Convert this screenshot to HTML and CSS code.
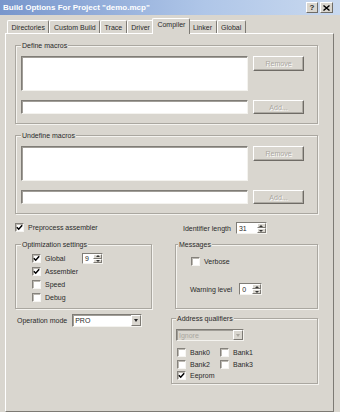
FILE: index.html
```html
<!DOCTYPE html>
<html lang="en">
<head>
  <meta charset="UTF-8">
  <meta name="viewport" content="width=device-width, initial-scale=1.0">
  <title>Build Options For Project "demo.mcp"</title>
  <link rel="stylesheet" href="styles.css">
</head>
<body>
  <div class="titlebar">
    <span class="title">Build Options For Project "demo.mcp"</span>
    <span class="caption-btns">
      <span class="cbtn help">?</span>
      <span class="cbtn">
        <svg width="7" height="6" viewBox="0 0 7 6"><path d="M0.5 0.5 L6.5 5.5 M6.5 0.5 L0.5 5.5" stroke="#000" stroke-width="1.4"/></svg>
      </span>
    </span>
  </div>

  <div class="tabs">
    <span class="tab">Directories</span>
    <span class="tab">Custom Build</span>
    <span class="tab">Trace</span>
    <span class="tab">Driver</span>
    <span class="tab active">Compiler</span>
    <span class="tab">Linker</span>
    <span class="tab">Global</span>
  </div>

  <div class="panel">
    <!-- macro lists -->
    <fieldset class="group">
      <legend>Define macros</legend>
      <div class="macro-grid">
        <div class="list"></div>
        <button class="btn tall" disabled>Remove</button>
        <div class="field"></div>
        <button class="btn" disabled>Add...</button>
      </div>
    </fieldset>

    <fieldset class="group undef">
      <legend>Undefine macros</legend>
      <div class="macro-grid">
        <div class="list"></div>
        <button class="btn tall" disabled>Remove</button>
        <div class="field"></div>
        <button class="btn" disabled>Add...</button>
      </div>
    </fieldset>

    <div class="options">
      <label class="check">
        <span class="box"><svg width="7" height="7" viewBox="0 0 7 7"><path d="M0.8 3.2 L2.7 5.2 L6.2 1.2" stroke="#000" stroke-width="1.5" fill="none"/></svg></span>
        Preprocess assembler
      </label>
      <div class="ident">
        Identifier length
        <span class="spin wide"><span class="spin-val">31</span><span class="spin-arrows"><i class="up"></i><i class="down"></i></span></span>
      </div>

      <fieldset class="group opt">
        <legend>Optimization settings</legend>
        <div class="opt-row">
          <label class="check">
            <span class="box"><svg width="7" height="7" viewBox="0 0 7 7"><path d="M0.8 3.2 L2.7 5.2 L6.2 1.2" stroke="#000" stroke-width="1.5" fill="none"/></svg></span>
            Global
          </label>
          <span class="spin"><span class="spin-val">9</span><span class="spin-arrows"><i class="up"></i><i class="down"></i></span></span>
        </div>
        <label class="check">
          <span class="box"><svg width="7" height="7" viewBox="0 0 7 7"><path d="M0.8 3.2 L2.7 5.2 L6.2 1.2" stroke="#000" stroke-width="1.5" fill="none"/></svg></span>
          Assembler
        </label>
        <label class="check"><span class="box"></span>Speed</label>
        <label class="check"><span class="box"></span>Debug</label>
      </fieldset>

      <fieldset class="group msgs">
        <legend>Messages</legend>
        <label class="check verbose"><span class="box"></span>Verbose</label>
        <div class="warn">
          Warning level
          <span class="spin small"><span class="spin-val">0</span><span class="spin-arrows"><i class="up"></i><i class="down"></i></span></span>
        </div>
      </fieldset>

      <div class="opmode">
        Operation mode
        <span class="combo">PRO<span class="drop"><i></i></span></span>
      </div>

      <fieldset class="group addr">
        <legend>Address qualifiers</legend>
        <span class="combo disabled">Ignore<span class="drop"><i></i></span></span>
        <div class="banks">
          <label class="check"><span class="box"></span>Bank0</label>
          <label class="check"><span class="box"></span>Bank1</label>
          <label class="check"><span class="box"></span>Bank2</label>
          <label class="check"><span class="box"></span>Bank3</label>
          <label class="check">
            <span class="box"><svg width="7" height="7" viewBox="0 0 7 7"><path d="M0.8 3.2 L2.7 5.2 L6.2 1.2" stroke="#000" stroke-width="1.5" fill="none"/></svg></span>
            Eeprom
          </label>
        </div>
      </fieldset>
    </div>
  </div>
</body>
</html>
```

FILE: styles.css
```css
/* classic dialog look */
body {
  margin: 0;
  width: 340px;
  height: 412px;
  overflow: hidden;
  background-color: #d9d6cf;
  font-family: "Liberation Sans", Arial, sans-serif;
  font-size: 7px;
  color: #2a2a2a;
}

.titlebar {
  height: 15px;
  display: flex;
  align-items: center;
  justify-content: space-between;
  padding: 0 7px 0 3px;
  background: linear-gradient(90deg, #7896cc, #afc6e8 60%, #c9d9ef);
}

.title {
  color: #fff;
  font-size: 8px;
  font-weight: bold;
}

.caption-btns {
  display: flex;
  gap: 2px;
}

.cbtn {
  width: 12px;
  height: 11px;
  box-sizing: border-box;
  display: flex;
  align-items: center;
  justify-content: center;
  background-color: #d9d6cf;
  border: 1px solid;
  border-color: #fff #6f6c66 #6f6c66 #fff;
  font-size: 8px;
  font-weight: bold;
}

.cbtn + .cbtn {
  width: 13px;
}

/* tabs */
.tabs {
  height: 18px;
  display: flex;
  align-items: flex-end;
  padding-left: 7px;
}

.tab {
  height: 13px;
  line-height: 13px;
  box-sizing: border-box;
  padding: 0 3.5px;
  border-top: 1px solid #fff;
  border-left: 1px solid #fff;
  border-right: 1px solid #7d7a74;
  border-radius: 2px 2px 0 0;
  white-space: nowrap;
}

.tab.active {
  height: 16px;
  line-height: 11px;
  padding: 0 4px;
  margin: 0 -2px -1px -2px;
  position: relative;
  z-index: 1;
  background-color: #d9d6cf;
}

.panel {
  margin-left: 5px;
  width: 329px;
  height: 379px;
  box-sizing: border-box;
  border: 1px solid;
  border-color: #fff #7d7a74 #7d7a74 #fff;
  padding: 7px 15px 0 9px;
}

/* group boxes */
.group {
  margin: 0;
  min-width: 0;
  padding: 6px 5px 9px;
  border: 1px solid #aaa7a0;
  box-shadow: inset 1px 1px 0 #f4f3ef, 1px 1px 0 #f4f3ef;
}

.group legend {
  padding: 0 1px;
  line-height: 9px;
  background-color: #d9d6cf;
}

.group.undef {
  margin-top: 7px;
}

.macro-grid {
  display: grid;
  grid-template-columns: 227px 51px;
  column-gap: 5px;
  row-gap: 9px;
  align-items: start;
}

.list,
.field {
  background-color: #fff;
  box-sizing: border-box;
  border: 1px solid;
  border-color: #7f7c76 #f4f3ef #f4f3ef #7f7c76;
  box-shadow: inset 1px 1px 0 #a19e98;
}

.list {
  height: 35px;
}

.field {
  height: 14px;
}

.btn {
  font: inherit;
  height: 14px;
  padding: 0;
  color: #aaa7a0;
  text-shadow: 1px 1px 0 #fff;
  background-color: #d9d6cf;
  border: 1px solid;
  border-color: #fff #6f6c66 #6f6c66 #fff;
  box-shadow: inset -1px -1px 0 #aeaba4;
}

.btn.tall {
  height: 15px;
}

/* lower options */
.options {
  margin-top: 7px;
  display: grid;
  grid-template-columns: 137px 147px;
  grid-template-rows: 14px auto auto;
  column-gap: 19px;
  row-gap: 5px;
}

.check {
  display: flex;
  align-items: center;
  gap: 4px;
  height: 13px;
  white-space: nowrap;
}

.box {
  width: 9px;
  height: 9px;
  box-sizing: border-box;
  flex-shrink: 0;
  display: flex;
  align-items: center;
  justify-content: center;
  background-color: #fff;
  border: 1px solid;
  border-color: #85827c #f6f5f2 #f6f5f2 #85827c;
  box-shadow: inset 1px 1px 0 #bdbab3;
}

.ident {
  display: flex;
  align-items: center;
  gap: 5px;
  padding-left: 12px;
}

.spin {
  display: inline-flex;
  height: 11px;
  width: 21px;
  box-sizing: border-box;
  background-color: #fff;
  border: 1px solid;
  border-color: #7f7c76 #f4f3ef #f4f3ef #7f7c76;
}

.spin.wide {
  width: 31px;
  height: 12px;
}

.spin.small {
  width: 23px;
  height: 12px;
}

.spin-val {
  flex: 1;
  padding-left: 2px;
  display: flex;
  align-items: center;
}

.spin-arrows {
  width: 9px;
  display: flex;
  flex-direction: column;
}

.spin-arrows i {
  flex: 1;
  display: flex;
  align-items: center;
  justify-content: center;
  background-color: #d9d6cf;
  border: 1px solid;
  border-color: #fff #7d7a74 #7d7a74 #fff;
  box-sizing: border-box;
}

.spin-arrows i::after {
  content: "";
  border-left: 2px solid transparent;
  border-right: 2px solid transparent;
}

.spin-arrows .up::after {
  border-bottom: 2px solid #333;
}

.spin-arrows .down::after {
  border-top: 2px solid #333;
}

.opt {
  padding: 3px 5px 4px 16px;
}

.opt legend {
  margin-left: -11px;
}

.opt-row {
  display: flex;
  align-items: center;
}

.opt-row .check {
  width: 50px;
}

.msgs {
  margin-left: 4px;
  padding: 6px 5px 13px;
}

.msgs legend {
  margin-left: -3px;
}

.verbose {
  margin-left: 10px;
  height: 12px;
}

.warn {
  margin: 16px 0 0 9px;
  display: flex;
  align-items: center;
  gap: 7px;
}

.opmode {
  align-self: start;
  display: flex;
  align-items: center;
  gap: 5px;
  padding-left: 2px;
  height: 13px;
}

.combo {
  display: inline-flex;
  align-items: center;
  justify-content: space-between;
  width: 70px;
  height: 13px;
  box-sizing: border-box;
  padding-left: 2px;
  background-color: #fff;
  border: 1px solid;
  border-color: #7f7c76 #f4f3ef #f4f3ef #7f7c76;
  box-shadow: inset 1px 1px 0 #a19e98;
}

.drop {
  width: 10px;
  height: 100%;
  box-sizing: border-box;
  display: flex;
  align-items: center;
  justify-content: center;
  background-color: #d9d6cf;
  border: 1px solid;
  border-color: #fff #7d7a74 #7d7a74 #fff;
}

.drop i {
  border-left: 2.5px solid transparent;
  border-right: 2.5px solid transparent;
  border-top: 3px solid #222;
}

.addr {
  padding: 6px 4px 1px;
}

.combo.disabled {
  width: 68px;
  height: 12px;
  color: #aaa7a0;
  background-color: #d9d6cf;
}

.combo.disabled .drop i {
  border-top-color: #aaa7a0;
}

.banks {
  margin: 6px 0 0 1px;
  display: grid;
  grid-template-columns: 43px auto;
  grid-auto-rows: 11.5px;
}

.banks .check {
  height: 11.5px;
}
```
